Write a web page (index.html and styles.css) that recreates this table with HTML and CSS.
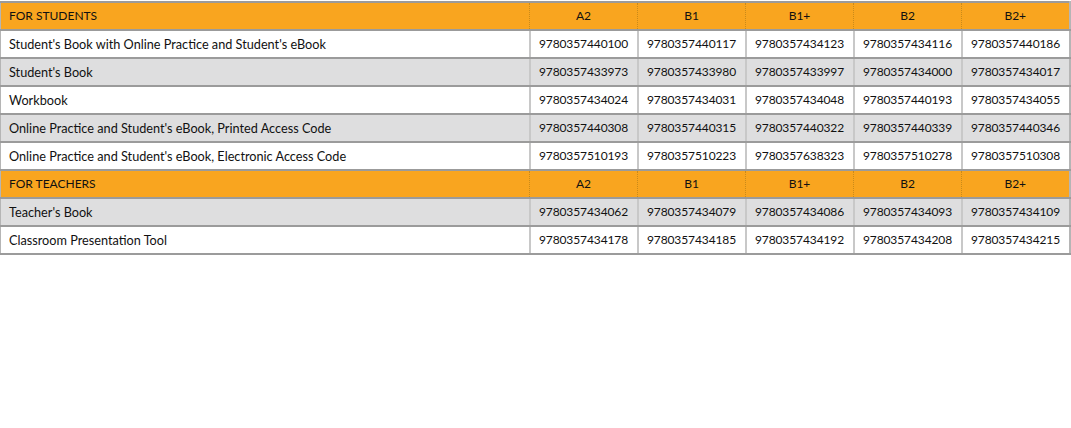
FILE: index.html
```html
<!DOCTYPE html>
<html>
<head>
<meta charset="utf-8">
<link rel="stylesheet" href="styles.css">
</head>
<body>
<table class="isbn">
  <colgroup>
    <col class="c-name"><col class="c-lvl"><col class="c-lvl"><col class="c-lvl"><col class="c-lvl"><col class="c-lvl">
  </colgroup>
  <tr class="head"><td>FOR STUDENTS</td><td>A2</td><td>B1</td><td>B1+</td><td>B2</td><td>B2+</td></tr>
  <tr class="white"><td>Student's Book with Online Practice and Student's eBook</td><td>9780357440100</td><td>9780357440117</td><td>9780357434123</td><td>9780357434116</td><td>9780357440186</td></tr>
  <tr class="grey"><td>Student's Book</td><td>9780357433973</td><td>9780357433980</td><td>9780357433997</td><td>9780357434000</td><td>9780357434017</td></tr>
  <tr class="white"><td>Workbook</td><td>9780357434024</td><td>9780357434031</td><td>9780357434048</td><td>9780357440193</td><td>9780357434055</td></tr>
  <tr class="grey"><td>Online Practice and Student's eBook, Printed Access Code</td><td>9780357440308</td><td>9780357440315</td><td>9780357440322</td><td>9780357440339</td><td>9780357440346</td></tr>
  <tr class="white"><td>Online Practice and Student's eBook, Electronic Access Code</td><td>9780357510193</td><td>9780357510223</td><td>9780357638323</td><td>9780357510278</td><td>9780357510308</td></tr>
  <tr class="head"><td>FOR TEACHERS</td><td>A2</td><td>B1</td><td>B1+</td><td>B2</td><td>B2+</td></tr>
  <tr class="grey"><td>Teacher's Book</td><td>9780357434062</td><td>9780357434079</td><td>9780357434086</td><td>9780357434093</td><td>9780357434109</td></tr>
  <tr class="white"><td>Classroom Presentation Tool</td><td>9780357434178</td><td>9780357434185</td><td>9780357434192</td><td>9780357434208</td><td>9780357434215</td></tr>
</table>
</body>
</html>
```

FILE: styles.css
```css
html, body {
  margin: 0;
  padding: 0;
  background: #ffffff;
}
body {
  padding-top: 1px;
  font-family: "Lato", "Open Sans", sans-serif;
  font-size: 12px;
  color: #111111;
}
.isbn {
  border-collapse: collapse;
  table-layout: fixed;
  width: 1070px;
}
.c-name { width: 529px; }
.c-lvl { width: 108px; }
.isbn td {
  height: 26px;
  padding: 0 8px;
  border-top: 2px solid #9b9b9b;
  border-bottom: 2px solid #9b9b9b;
  border-left: 2px solid #c8c8c8;
  border-right: 2px solid #c8c8c8;
  text-align: center;
  white-space: nowrap;
  line-height: 16px;
  letter-spacing: -0.1px;
}
.isbn td:first-child {
  text-align: left;
  border-left: 1px solid #b5b5b5;
  font-size: 12.7px;
  letter-spacing: 0;
}
.isbn td:last-child {
  border-right: 2px solid #b5b5b5;
}
.head td {
  background: #f9a51f;
  border-left: 1px dotted #c98a1a;
  border-right: 1px dotted #c98a1a;
}
.head td:first-child {
  border-left: 1px solid #b5b5b5;
  font-size: 12px;
}
.head td:last-child { border-right: 2px solid #b5b5b5; }
.grey td {
  background: #dededf;
}
.white td {
  background: #ffffff;
}
```
